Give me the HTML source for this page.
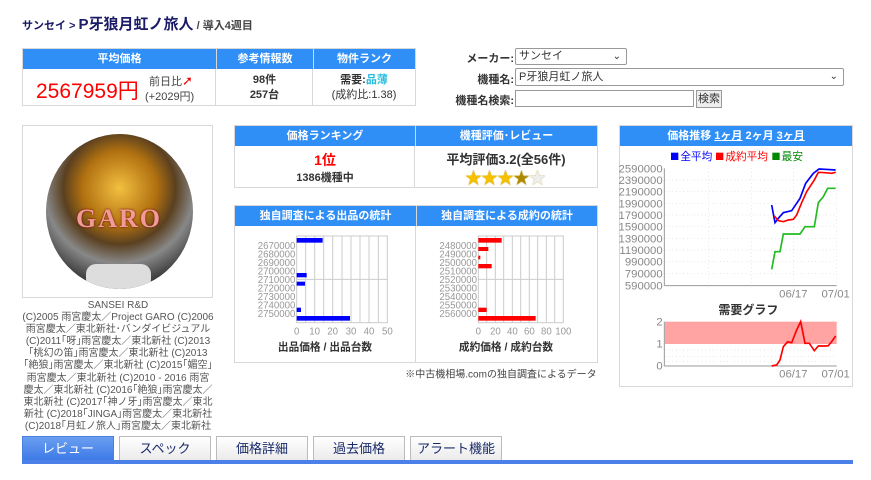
<!DOCTYPE html>
<html><head><meta charset="utf-8"><style>
*{margin:0;padding:0;box-sizing:border-box}
body{width:871px;height:480px;background:#fff;font-family:"Liberation Sans","Noto Sans CJK JP",sans-serif;position:relative;overflow:hidden;color:#333}
.a{position:absolute}
.hd{background:#2f8ff7;color:#fff;font-weight:bold;font-size:11px;text-align:center;line-height:20px;height:20px}
.box{border:1px solid #d8d8d8}
.tab{position:absolute;top:436px;height:25px;width:92px;border:1px solid #bbb;border-bottom:none;background:linear-gradient(#fff,#eaeaea);font-size:13px;text-align:center;line-height:24px;color:#1a2a6a}
</style></head><body>
<div class="a" style="left:22px;top:13px;font-weight:bold;color:#1a1a66;white-space:nowrap">
<span style="font-size:11px">サンセイ &gt; </span><span style="font-size:15px">P牙狼月虹ノ旅人</span><span style="font-size:11px;color:#444"> / 導入4週目</span></div>

<div class="a box" style="left:22px;top:48px;width:394px;height:58px">
<div class="a hd" style="left:0;top:0;width:193px">平均価格</div>
<div class="a hd" style="left:193px;top:0;width:97px;border-left:1px solid #d8d8d8">参考情報数</div>
<div class="a hd" style="left:290px;top:0;width:102px;border-left:1px solid #d8d8d8">物件ランク</div>
<div class="a" style="left:192px;top:20px;width:1px;height:36px;background:#d8d8d8"></div>
<div class="a" style="left:289px;top:20px;width:1px;height:36px;background:#d8d8d8"></div>
<div class="a" style="left:13px;top:26px;font-size:21px;color:#f00">2567959円</div>
<div class="a" style="left:126px;top:24px;font-size:11px;color:#444">前日比<span style="color:#e00;font-size:13px">➚</span></div>
<div class="a" style="left:122px;top:39px;font-size:11px;color:#444">(+2029円)</div>
<div class="a" style="left:193px;top:24px;width:97px;text-align:center;font-size:11px;font-weight:bold;line-height:15px">98件<br>257台</div>
<div class="a" style="left:290px;top:24px;width:102px;text-align:center;font-size:11px;line-height:15px"><b>需要:</b><b style="color:#2bd">品薄</b><br>(成約比:1.38)</div>
</div>

<div class="a" style="left:440px;top:50px;width:74px;text-align:right;font-size:11px;font-weight:bold;color:#333">メーカー:</div>
<div class="a" style="left:515px;top:48px;width:112px;height:17px;border:1px solid #999;border-radius:2px;font-size:11px;line-height:15px;padding-left:3px">サンセイ<span style="position:absolute;right:5px;font-size:10px">⌄</span></div>
<div class="a" style="left:440px;top:71px;width:74px;text-align:right;font-size:11px;font-weight:bold">機種名:</div>
<div class="a" style="left:515px;top:68px;width:329px;height:18px;border:1px solid #999;border-radius:2px;font-size:11px;line-height:16px;padding-left:3px">P牙狼月虹ノ旅人<span style="position:absolute;right:5px;font-size:10px">⌄</span></div>
<div class="a" style="left:440px;top:92px;width:74px;text-align:right;font-size:11px;font-weight:bold">機種名検索:</div>
<div class="a" style="left:515px;top:90px;width:179px;height:17px;border:1px solid #999"></div>
<div class="a" style="left:696px;top:90px;width:26px;height:18px;border:1px solid #999;background:#eee;font-size:11px;line-height:16px;text-align:center">検索</div>

<div class="a box" style="left:22px;top:125px;width:191px;height:173px">
<div class="a" style="left:23px;top:8px;width:147px;height:155px;border-radius:50%;background:radial-gradient(circle at 50% 35%,#f2c040 0,#b07010 30%,#5a4020 45%,#888 60%,#333 80%,#222 100%);overflow:hidden">
<div class="a" style="left:18px;top:70px;width:110px;height:26px;color:#f29a9a;font:bold 26px 'Liberation Serif',serif;letter-spacing:2px;text-align:center;text-shadow:0 0 2px #600">GARO</div>
<div class="a" style="left:40px;top:130px;width:65px;height:25px;background:#ddd;border-radius:10px"></div>
</div></div>
<div class="a" style="left:22px;top:300px;width:192px;font-size:10px;line-height:12.1px;text-align:center;color:#555">SANSEI R&amp;D<br>(C)2005 雨宮慶太／Project GARO (C)2006 雨宮慶太／東北新社･バンダイビジュアル (C)2011｢呀｣雨宮慶太／東北新社 (C)2013｢桃幻の笛｣雨宮慶太／東北新社 (C)2013｢絶狼｣雨宮慶太／東北新社 (C)2015｢媚空｣雨宮慶太／東北新社 (C)2010 - 2016 雨宮慶太／東北新社 (C)2016｢絶狼｣雨宮慶太／東北新社 (C)2017｢神ノ牙｣雨宮慶太／東北新社 (C)2018｢JINGA｣雨宮慶太／東北新社 (C)2018｢月虹ノ旅人｣雨宮慶太／東北新社</div>

<div class="a box" style="left:234px;top:125px;width:364px;height:63px">
<div class="a hd" style="left:0;top:0;width:180px">価格ランキング</div>
<div class="a hd" style="left:180px;top:0;width:182px;border-left:1px solid #d8d8d8">機種評価･レビュー</div>
<div class="a" style="left:179px;top:20px;width:1px;height:41px;background:#d8d8d8"></div>
<div class="a" style="left:0;top:24px;width:180px;text-align:center;color:#f00;font-weight:bold;font-size:14px">1位</div>
<div class="a" style="left:0;top:43px;width:180px;text-align:center;font-weight:bold;font-size:11px">1386機種中</div>
<div class="a" style="left:180px;top:23px;width:182px;text-align:center;font-size:13px;font-weight:bold;color:#333">平均評価3.2(全56件)</div>
<div class="a" style="left:230px;top:38px;font-size:17px;letter-spacing:-1px;color:#f5c000;text-shadow:0 0 1px #a80">★★★<span style="background:linear-gradient(90deg,#f5c000 50%,#ddd 50%);-webkit-background-clip:text;color:transparent">★</span><span style="color:#eee">★</span></div>
</div>

<div class="a box" style="left:234px;top:205px;width:364px;height:158px">
<div class="a hd" style="left:0;top:0;width:181px">独自調査による出品の統計</div>
<div class="a hd" style="left:181px;top:0;width:181px;border-left:1px solid #d8d8d8">独自調査による成約の統計</div>
<div class="a" style="left:180px;top:20px;width:1px;height:136px;background:#d8d8d8"></div>
</div>
<svg class="a" style="left:230px;top:120px" width="380" height="270" viewBox="0 0 1140 810">
<g stroke="#ccc" stroke-width="3" fill="none">
<rect x="200" y="348" width="272" height="260"/>
<line x1="227" y1="348" x2="227" y2="608"/><line x1="254" y1="348" x2="254" y2="608"/><line x1="281" y1="348" x2="281" y2="608"/><line x1="308" y1="348" x2="308" y2="608"/><line x1="336" y1="348" x2="336" y2="608"/><line x1="363" y1="348" x2="363" y2="608"/><line x1="390" y1="348" x2="390" y2="608"/><line x1="417" y1="348" x2="417" y2="608"/><line x1="445" y1="348" x2="445" y2="608"/><line x1="200" y1="478" x2="472" y2="478"/>
<rect x="745" y="348" width="255" height="260"/>
<line x1="770" y1="348" x2="770" y2="608"/><line x1="796" y1="348" x2="796" y2="608"/><line x1="821" y1="348" x2="821" y2="608"/><line x1="847" y1="348" x2="847" y2="608"/><line x1="872" y1="348" x2="872" y2="608"/><line x1="898" y1="348" x2="898" y2="608"/><line x1="923" y1="348" x2="923" y2="608"/><line x1="949" y1="348" x2="949" y2="608"/><line x1="974" y1="348" x2="974" y2="608"/><line x1="745" y1="478" x2="1000" y2="478"/>
</g>
<g fill="#00f"><rect x="200" y="354" width="78" height="14"/><rect x="200" y="459" width="30" height="13"/><rect x="200" y="485" width="25" height="12"/><rect x="200" y="563" width="13" height="13"/><rect x="200" y="588" width="160" height="14"/></g>
<g fill="#f00"><rect x="745" y="354" width="70" height="14"/><rect x="745" y="381" width="30" height="12"/><rect x="745" y="407" width="6" height="11"/><rect x="745" y="432" width="40" height="13"/><rect x="745" y="563" width="25" height="13"/><rect x="745" y="588" width="172" height="14"/></g>
<g font-family="Liberation Sans,sans-serif" font-size="29" fill="#999" text-anchor="end">
<text x="196" y="387">2670000</text><text x="196" y="412">2680000</text><text x="196" y="438">2690000</text><text x="196" y="463">2700000</text><text x="196" y="489">2710000</text><text x="196" y="514">2720000</text><text x="196" y="540">2730000</text><text x="196" y="565">2740000</text><text x="196" y="591">2750000</text>
<text x="741" y="387">2480000</text><text x="741" y="412">2490000</text><text x="741" y="438">2500000</text><text x="741" y="463">2510000</text><text x="741" y="489">2520000</text><text x="741" y="514">2530000</text><text x="741" y="540">2540000</text><text x="741" y="565">2550000</text><text x="741" y="591">2560000</text>
</g>
<g font-family="Liberation Sans,sans-serif" font-size="29" fill="#999" text-anchor="middle">
<text x="200" y="643">0</text><text x="254" y="643">10</text><text x="308" y="643">20</text><text x="363" y="643">30</text><text x="417" y="643">40</text><text x="472" y="643">50</text>
<text x="745" y="643">0</text><text x="796" y="643">20</text><text x="847" y="643">40</text><text x="898" y="643">60</text><text x="949" y="643">80</text><text x="1000" y="643">100</text>
</g>
<g font-family="Liberation Sans,Noto Sans CJK JP,sans-serif" font-size="32" font-weight="bold" fill="#333" text-anchor="middle">
<text x="285" y="692">出品価格 / 出品台数</text><text x="828" y="692">成約価格 / 成約台数</text></g>
<text x="1100" y="772" text-anchor="end" font-family="Liberation Sans,Noto Sans CJK JP,sans-serif" font-size="30" fill="#444">※中古機相場.comの独自調査によるデータ</text>
</svg>

<div class="a box" style="left:619px;top:125px;width:234px;height:262px">
<div class="a hd" style="left:0;top:0;width:232px;font-size:11px">価格推移 <u>1ヶ月</u> 2ヶ月 <u>3ヶ月</u></div></div>
<svg class="a" style="left:615px;top:120px" width="240" height="270" viewBox="0 0 720 810">
<g stroke="#ccc" stroke-width="2" stroke-dasharray="2 9" fill="none">
<line x1="150" y1="180" x2="665" y2="180"/><line x1="150" y1="215" x2="665" y2="215"/><line x1="150" y1="250" x2="665" y2="250"/><line x1="150" y1="285" x2="665" y2="285"/><line x1="150" y1="320" x2="665" y2="320"/><line x1="150" y1="355" x2="665" y2="355"/><line x1="150" y1="390" x2="665" y2="390"/><line x1="150" y1="425" x2="665" y2="425"/><line x1="150" y1="460" x2="665" y2="460"/>
<line x1="280" y1="145" x2="280" y2="497"/><line x1="410" y1="145" x2="410" y2="497"/><line x1="535" y1="145" x2="535" y2="497"/><line x1="665" y1="145" x2="665" y2="497"/>
<line x1="150" y1="690" x2="665" y2="690"/><line x1="150" y1="710" x2="665" y2="710"/><line x1="150" y1="725" x2="665" y2="725"/>
</g>
<g stroke="#999" stroke-width="3"><line x1="148" y1="145" x2="148" y2="497"/><line x1="148" y1="497" x2="665" y2="497"/><line x1="148" y1="605" x2="148" y2="738"/><line x1="148" y1="738" x2="665" y2="738"/></g>
<g font-family="Liberation Sans,Noto Sans CJK JP,sans-serif" font-size="32"><rect x="168" y="98" width="22" height="22" fill="#00f"/><text x="196" y="120" fill="#00f">全平均</text><rect x="303" y="98" width="22" height="22" fill="#f00"/><text x="331" y="120" fill="#f00">成約平均</text><rect x="472" y="98" width="22" height="22" fill="#080"/><text x="500" y="120" fill="#080">最安</text></g>
<g font-family="Liberation Sans,sans-serif" font-size="34" fill="#888" text-anchor="end">
<text x="143" y="157">2590000</text><text x="143" y="192">2390000</text><text x="143" y="227">2190000</text><text x="143" y="262">1990000</text><text x="143" y="297">1790000</text><text x="143" y="332">1590000</text><text x="143" y="367">1390000</text><text x="143" y="402">1190000</text><text x="143" y="437">990000</text><text x="143" y="472">790000</text><text x="143" y="508">590000</text>
<text x="143" y="616">2</text><text x="143" y="683">1</text><text x="143" y="749">0</text></g>
<g font-family="Liberation Sans,sans-serif" font-size="34" fill="#888" text-anchor="middle"><text x="535" y="532">06/17</text><text x="662" y="532">07/01</text><text x="535" y="773">06/17</text><text x="662" y="773">07/01</text></g>
<text x="400" y="582" text-anchor="middle" font-family="Liberation Sans,Noto Sans CJK JP,sans-serif" font-size="36" font-weight="bold" fill="#333">需要グラフ</text>
<rect x="150" y="605" width="515" height="67" fill="#f99" opacity="0.9"/>
<g fill="none" stroke-width="5">
<polyline stroke="#00f" points="470,255 480,308 490,295 505,278 530,272 555,235 572,190 595,160 612,147 630,148 662,150"/>
<polyline stroke="#f00" points="478,288 490,302 505,305 520,300 535,298 545,285 560,248 575,215 598,180 610,157 630,158 650,160 662,157"/>
<polyline stroke="#2b2" points="470,448 480,395 495,395 505,342 530,342 555,342 570,320 598,320 610,248 625,230 638,205 662,205"/>
<polyline stroke="#f00" points="470,738 485,735 495,720 505,680 518,665 530,668 545,630 557,605 570,670 583,670 598,692 610,678 630,678 640,677 650,665 662,648"/>
</g></svg>

<div class="tab" style="left:22px;background:linear-gradient(#6a9ff0,#3b78e7);color:#fff;border-color:#4a80e0">レビュー</div>
<div class="tab" style="left:119px">スペック</div>
<div class="tab" style="left:216px">価格詳細</div>
<div class="tab" style="left:313px">過去価格</div>
<div class="tab" style="left:410px">アラート機能</div>
<div class="a" style="left:22px;top:460px;width:831px;height:4px;background:#4a80e8"></div>
</body></html>
